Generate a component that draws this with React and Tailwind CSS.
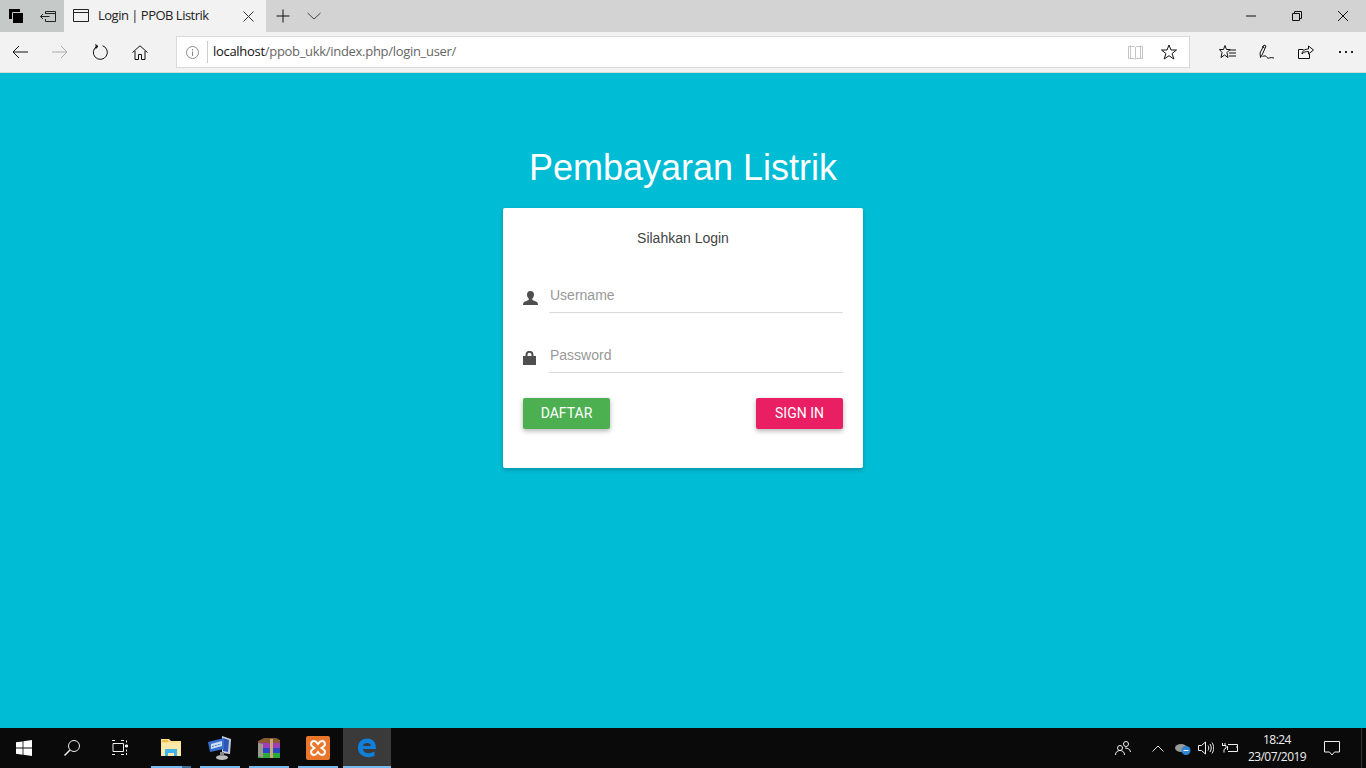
import React from 'react';

const Ico = ({ w = 16, h = 16, vb, className = '', children }) => (
  <svg width={w} height={h} viewBox={vb || `0 0 ${w} ${h}`} fill="none" stroke="currentColor" strokeWidth="1" className={`shrink-0 ${className}`}>
    {children}
  </svg>
);

const TabBar = () => (
  <div className="flex h-8 bg-[#d3d3d3] text-black">
    <div className="flex w-16 h-8 bg-[#c5cac8] items-center">
      <div className="flex w-8 justify-center">
        <svg width="14" height="14" viewBox="0 0 14 14" className="shrink-0">
          <path d="M0 0h11v10H0z" fill="#000" />
          <path d="M3.500 3.500h10.500v10.500H3.500z" fill="#000" stroke="#c5cac8" />
          <path d="M4 4h10v10H4z" fill="#000" />
        </svg>
      </div>
      <div className="flex w-8 justify-center">
        <Ico w={16} h={11} className="text-[#222]">
          <path d="M5.500 3V.5h10v10h-10V8M6 2.500h9.500" />
          <path d="M.5 5.500h9M3 3L.5 5.500 3 8" />
        </Ico>
      </div>
    </div>
    <div className="flex w-[202px] h-8 items-center bg-[#f2f2f2] pl-[9px]">
      <Ico w={16} h={14}>
        <path d="M.5.5h15v12H.5zM.5 3.500h15" stroke="#222" />
      </Ico>
      <span className="ml-[9px] w-[145px] text-[13px] text-[#222] font-['Open_Sans','Noto_Sans',sans-serif] tracking-[-0.5px]">Login | PPOB Listrik</span>
      <Ico w={11} h={11} className="text-[#333]">
        <path d="M.5.5l10 10M10.500.5l-10 10" />
      </Ico>
    </div>
    <div className="flex items-center pl-[10px] gap-[17px]">
      <Ico w={14} h={14}>
        <path d="M7 .5v13M.5 7h13" stroke="#111" />
      </Ico>
      <Ico w={14} h={8} className="text-[#444]">
        <path d="M.5 1L7 7l6.500-6" />
      </Ico>
    </div>
    <div className="ml-auto flex items-center text-[#111]">
      <div className="flex w-[46px] justify-center">
        <Ico w={10} h={2}><path d="M0 1h10" /></Ico>
      </div>
      <div className="flex w-[46px] justify-center">
        <Ico w={10} h={10}>
          <path d="M.5 2.500h7v7h-7zM2.500 2.500v-2h7v7h-2" />
        </Ico>
      </div>
      <div className="flex w-[46px] justify-center">
        <Ico w={10} h={10}><path d="M0 0l10 10M10 0L0 10" /></Ico>
      </div>
    </div>
  </div>
);

const ToolBar = () => (
  <div className="flex h-[41px] items-center bg-[#f2f2f2] border-b border-[#d9d9d9] text-[#111]">
    <div className="flex w-[176px] shrink-0 items-center">
      <div className="flex w-10 justify-center">
        <Ico w={16} h={14}><path d="M16 7H1M7 1L1 7l6 6" /></Ico>
      </div>
      <div className="flex w-10 justify-center text-[#aaaaaa]">
        <Ico w={16} h={14}><path d="M0 7h15M9 1l6 6-6 6" /></Ico>
      </div>
      <div className="flex w-10 justify-center">
        <Ico w={16} h={16}>
          <path d="M5 2.200A7 7 0 1 0 10.500 1.700" />
          <path d="M3.500 .5L6 2.400 3.500 4.800" fill="currentColor" />
        </Ico>
      </div>
      <div className="flex w-10 justify-center">
        <Ico w={16} h={15}>
          <path d="M.5 7.500L8 .8l7.500 6.700M3 6v8.500h3.500V9.500h3V14.500H13V6" />
        </Ico>
      </div>
    </div>
    <div className="flex h-8 w-[1014px] shrink-0 items-center border border-[#d9d9d9] bg-white">
      <div className="flex w-[30px] justify-center text-[#8a8a8a]">
        <Ico w={13} h={13}>
          <circle cx="6.500" cy="6.500" r="6" />
          <path d="M6.500 5.500v4.500M6.500 3v1.500" />
        </Ico>
      </div>
      <div className="h-[22px] w-px bg-[#cfcfcf]" />
      <span className="ml-[5px] text-[13px] tracking-[-0.3px] text-[#666] font-['Open_Sans','Noto_Sans',sans-serif]">
        <span className="text-[#111]">localhost</span>/ppob_ukk/index.php/login_user/
      </span>
      <div className="ml-auto flex items-center gap-[18px] pr-[12px]">
        <Ico w={15} h={15} className="text-[#c4c4c4]">
          <path d="M.5 1.500h6l1 1 1-1h6v12h-6l-1 1-1-1h-6zM7.500 2.500v11M2.500 .5v13M12.500 .5v13" />
        </Ico>
        <Ico w={16} h={16}>
          <path d="M8 1l2 5h5.500l-4.400 3.500 1.700 5.500L8 11.700 3.200 15l1.700-5.500L.5 6H6z" />
        </Ico>
      </div>
    </div>
    <div className="flex flex-1 items-center pl-[17px] gap-[23px]">
      <div className="ml-[12px]">
        <Ico w={17} h={16}>
          <path d="M6 1.500l1.500 4H11L8 8.500l1 5-3.500-2.500L2 13.500l1-5L.5 5.500H4.500z" />
          <path d="M10 6h7M10 9h7M10 12h7" />
        </Ico>
      </div>
      <Ico w={16} h={16}>
        <path d="M1.500 13.500L1 9l4-8 2 1-3.500 8zM3 2.500l2.500 1.500M3.500 12.500c2-1 3.500-1 4.500 1s3-1 7 .5" />
      </Ico>
      <Ico w={16} h={15} className="-translate-y-px">
        <path d="M.5 5.500h5M.5 5.500v9h11V10" />
        <path d="M4 10c0-3 3-5 6.500-5V2L15.500 6l-5 4V7.500C8 7.500 5.500 8 4 10z" />
      </Ico>
      <div className="ml-[2px] flex gap-[4px]">
        <span className="h-[2px] w-[2px] bg-[#222]" />
        <span className="h-[2px] w-[2px] bg-[#222]" />
        <span className="h-[2px] w-[2px] bg-[#222]" />
      </div>
    </div>
  </div>
);

const Field = ({ placeholder, icon }) => (
  <div className="flex h-[60px] items-start">
    <div className="mt-[18px] flex h-4 w-[26px] shrink-0 items-start">{icon}</div>
    <div className="flex h-[40px] flex-1 items-center border-b border-[#d9d9d9] pt-[5px] pl-px text-[14px] text-[#999] font-['Liberation_Sans',sans-serif]">
      {placeholder}
    </div>
  </div>
);

const UserIcon = () => (
  <svg width="15" height="14" viewBox="0 0 15 14" fill="#4f4f4f">
    <path d="M7.500 0C5 0 4 1.800 4 3.600c0 1.800.8 3.300 1.700 4V9L1.500 10.800C.5 11.300 0 12.400 0 14h15c0-1.600-.5-2.700-1.500-3.200L9.300 9V7.600c.9-.7 1.700-2.200 1.700-4C11 1.800 10 0 7.500 0z" />
  </svg>
);

const LockIcon = () => (
  <svg width="13" height="14" viewBox="0 0 13 14" fill="none">
    <path d="M3.500 6V3.800a3 3 0 0 1 6 0V6" stroke="#4f4f4f" strokeWidth="2" />
    <rect x="0" y="5" width="13" height="9" fill="#4f4f4f" />
  </svg>
);

const LoginCard = () => (
  <div className="flex h-[260px] w-[360px] flex-col rounded-[2px] bg-white px-5 shadow-[0_2px_4px_rgba(0,0,0,0.2)] font-['Liberation_Sans',sans-serif]">
    <p className="mt-[22px] h-4 text-center text-[14px] leading-4 text-[#444]">Silahkan Login</p>
    <div className="mt-[27px]">
      <Field placeholder="Username" icon={<UserIcon />} />
      <Field placeholder="Password" icon={<LockIcon />} />
    </div>
    <div className="mt-[5px] flex justify-between font-['Roboto',sans-serif]">
      <button className="h-[31px] w-[87px] rounded-[2px] bg-[#4caf50] text-[14px] text-white shadow-[0_2px_5px_rgba(0,0,0,0.3)]">DAFTAR</button>
      <button className="h-[31px] w-[87px] rounded-[2px] bg-[#e91e63] text-[14px] text-white shadow-[0_2px_5px_rgba(0,0,0,0.3)]">SIGN IN</button>
    </div>
  </div>
);

const AppSlot = ({ active = false, stacked = false, children }) => (
  <div className={`relative flex h-10 items-center justify-center ${active ? 'w-[48px] bg-[#3a3a3a]' : 'w-[40px]'}`}>
    {children}
    <div className="absolute inset-x-0 bottom-0 h-[2px] bg-[#76b9ed]" />
    {stacked && <div className="absolute bottom-0 right-0 h-[2px] w-[9px] bg-[#3f7196]" />}
  </div>
);

const TaskBar = () => (
  <div className="flex h-10 items-center bg-[#0a0a0a] text-white">
    <div className="flex w-12 justify-center">
      <svg width="16" height="16" viewBox="0 0 16 16" fill="#fff">
        <path d="M0 2.300l6.600-.9v6.200H0zM7.400 1.300L16 0v7.600H7.400zM0 8.400h6.600v6.300L0 13.800zM7.400 8.400H16V16l-8.600-1.200z" />
      </svg>
    </div>
    <div className="flex w-[48px] justify-center">
      <Ico w={16} h={16} className="text-[#eee]">
        <circle cx="10" cy="6" r="5.500" />
        <path d="M6 10l-5.500 5.500" strokeWidth="1.500" />
      </Ico>
    </div>
    <div className="flex w-[48px] justify-center">
      <Ico w={16} h={16} className="text-[#eee]">
        <path d="M1 3.500h10.500v8H1zM0 .5h3M9 .5h3M0 14.500h3M9 14.500h3" />
        <path d="M13.500 5h2v2h-2z" fill="currentColor" />
        <path d="M14.500 .5v2M14.500 9.500v2M14.500 13v2" />
      </Ico>
    </div>
    <div className="ml-[7px] flex gap-[9px]">
      <AppSlot stacked>
        <svg width="22" height="20" viewBox="0 0 22 20">
          <path d="M1 1h8l2 2h10v15H1z" fill="#ffe08a" />
          <path d="M1 5h20v13H1z" fill="#fbe9ab" />
          <path d="M2 2h6v2H2z" fill="#e9bf4c" />
          <path d="M5 11h12v7h-3v-3H8v3H5z" fill="#3fb4e8" />
        </svg>
      </AppSlot>
      <AppSlot>
        <svg width="24" height="26" viewBox="0 0 24 26">
          <path d="M14 1l9 3-1 15-8-1z" fill="#c6d0dc" />
          <path d="M15 3l6 2-1 12-5-1z" fill="#2f55b8" />
          <path d="M0 7l16-4v11L2 17z" fill="#3a6fd0" />
          <path d="M3 9l11-3v5L3 14z" fill="#cfe0f5" />
          <path d="M4 11.500l9-2.500" stroke="#4477c9" strokeDasharray="2 1" />
          <ellipse cx="14" cy="22.500" rx="6" ry="2.500" fill="#bdbdbd" />
          <path d="M12 17h4v4h-4z" fill="#888" />
        </svg>
      </AppSlot>
      <AppSlot>
        <svg width="24" height="22" viewBox="0 0 24 22">
          <path d="M1 4l6-3h12l4 2v4H1z" fill="#8a5a33" />
          <path d="M1 6h22v5H1z" fill="#a03fb5" />
          <path d="M1 11h22v5H1z" fill="#2a48c4" />
          <path d="M1 16h22v5H1z" fill="#2fa83a" />
          <path d="M1 6l5 1v14l-5-2z" fill="#9a9a8c" />
          <path d="M13 2h3v19h-3z" fill="#c9a875" />
        </svg>
      </AppSlot>
      <AppSlot>
        <svg width="24" height="24" viewBox="0 0 24 24">
          <rect width="24" height="24" rx="2" fill="#e8772b" />
          <path d="M8 5c-3 0-4 4-1.500 5.500L8.500 12l-2 1.500C4 15 5 19 8 19c2 0 3-1.500 4-3 1 1.500 2 3 4 3 3 0 4-4 1.500-5.500l-2-1.500 2-1.500C20 9 19 5 16 5c-2 0-3 1.500-4 3-1-1.500-2-3-4-3z" fill="none" stroke="#fff" strokeWidth="2" />
        </svg>
      </AppSlot>
      <div className="-ml-[4px]">
        <AppSlot active>
          <svg width="22" height="22" viewBox="0 0 22 22" fill="none">
            <path d="M2 11C2 5 6 1.500 11 1.500c6 0 9 4 9 10.500H7c.3 4 5.500 6 11.500 2.500v4.500C11 22 2 19 2 11zM7 9h8c0-4-7.500-4-8 0z" fill="#0f7fd9" fillRule="evenodd" />
          </svg>
        </AppSlot>
      </div>
    </div>
    <div className="ml-auto flex items-center">
      <Ico w={16} h={16} className="mr-[21px] text-[#eee]">
        <circle cx="5" cy="8" r="2.500" />
        <path d="M.5 15c0-3 2-4.500 4.500-4.500S9.500 12 9.500 15" />
        <circle cx="11" cy="4" r="2.500" />
        <path d="M10 8c3 0 5 1 5.500 4" />
      </Ico>
      <Ico w={12} h={7} className="mr-[11px] text-[#ddd]">
        <path d="M.5 6.500L6 1l5.500 5.500" />
      </Ico>
      <svg width="16" height="13" viewBox="0 0 16 13" className="mr-[7px] shrink-0">
        <ellipse cx="6" cy="6" rx="6" ry="4" fill="#9a9a9a" />
        <circle cx="11" cy="8.500" r="4.500" fill="#2f86d6" />
        <path d="M8.500 8.500h5" stroke="#fff" />
      </svg>
      <Ico w={16} h={14} className="mr-[8px] text-[#eee]">
        <path d="M.5 4.500h3L7.500 1v12l-4-3.500h-3z" />
        <path d="M10 4.500c1 1.500 1 3.500 0 5M12 3c1.700 2.500 1.700 5.500 0 8M14 1.500c2.300 3.500 2.300 7.500 0 11" />
      </Ico>
      <Ico w={16} h={12} className="mr-[8px] text-[#eee]">
        <path d="M6 2.500h9.500v7H6M14 5h1.500v2M5.500 4v4M.5 1v2M3 1v2M0 3.500h4V6L2 7.500v3" />
      </Ico>
      <div className="flex w-[67px] flex-col items-center pr-[5px] text-[12px] leading-[17px] text-[#eee] font-['Open_Sans','Noto_Sans',sans-serif] tracking-[-0.55px]">
        <span>18:24</span>
        <span>23/07/2019</span>
      </div>
      <div className="flex w-[48px] justify-center pr-[10px]">
        <Ico w={16} h={15} className="text-[#eee]">
          <path d="M.5.5h15v10.500h-5L8 14 5.500 11H.5z" />
        </Ico>
      </div>
      <div className="h-10 w-[5px] border-l border-[#333]" />
    </div>
  </div>
);

export default function App() {
  return (
    <div className="flex h-[768px] w-[1366px] flex-col overflow-hidden bg-[#00bcd4]">
      <TabBar />
      <ToolBar />
      <main className="flex flex-1 flex-col items-center pt-[74px]">
        <h1 className="text-[36px] leading-[42px] text-white font-['Liberation_Sans',sans-serif]">Pembayaran Listrik</h1>
        <div className="mt-[19px]">
          <LoginCard />
        </div>
      </main>
      <TaskBar />
    </div>
  );
}
